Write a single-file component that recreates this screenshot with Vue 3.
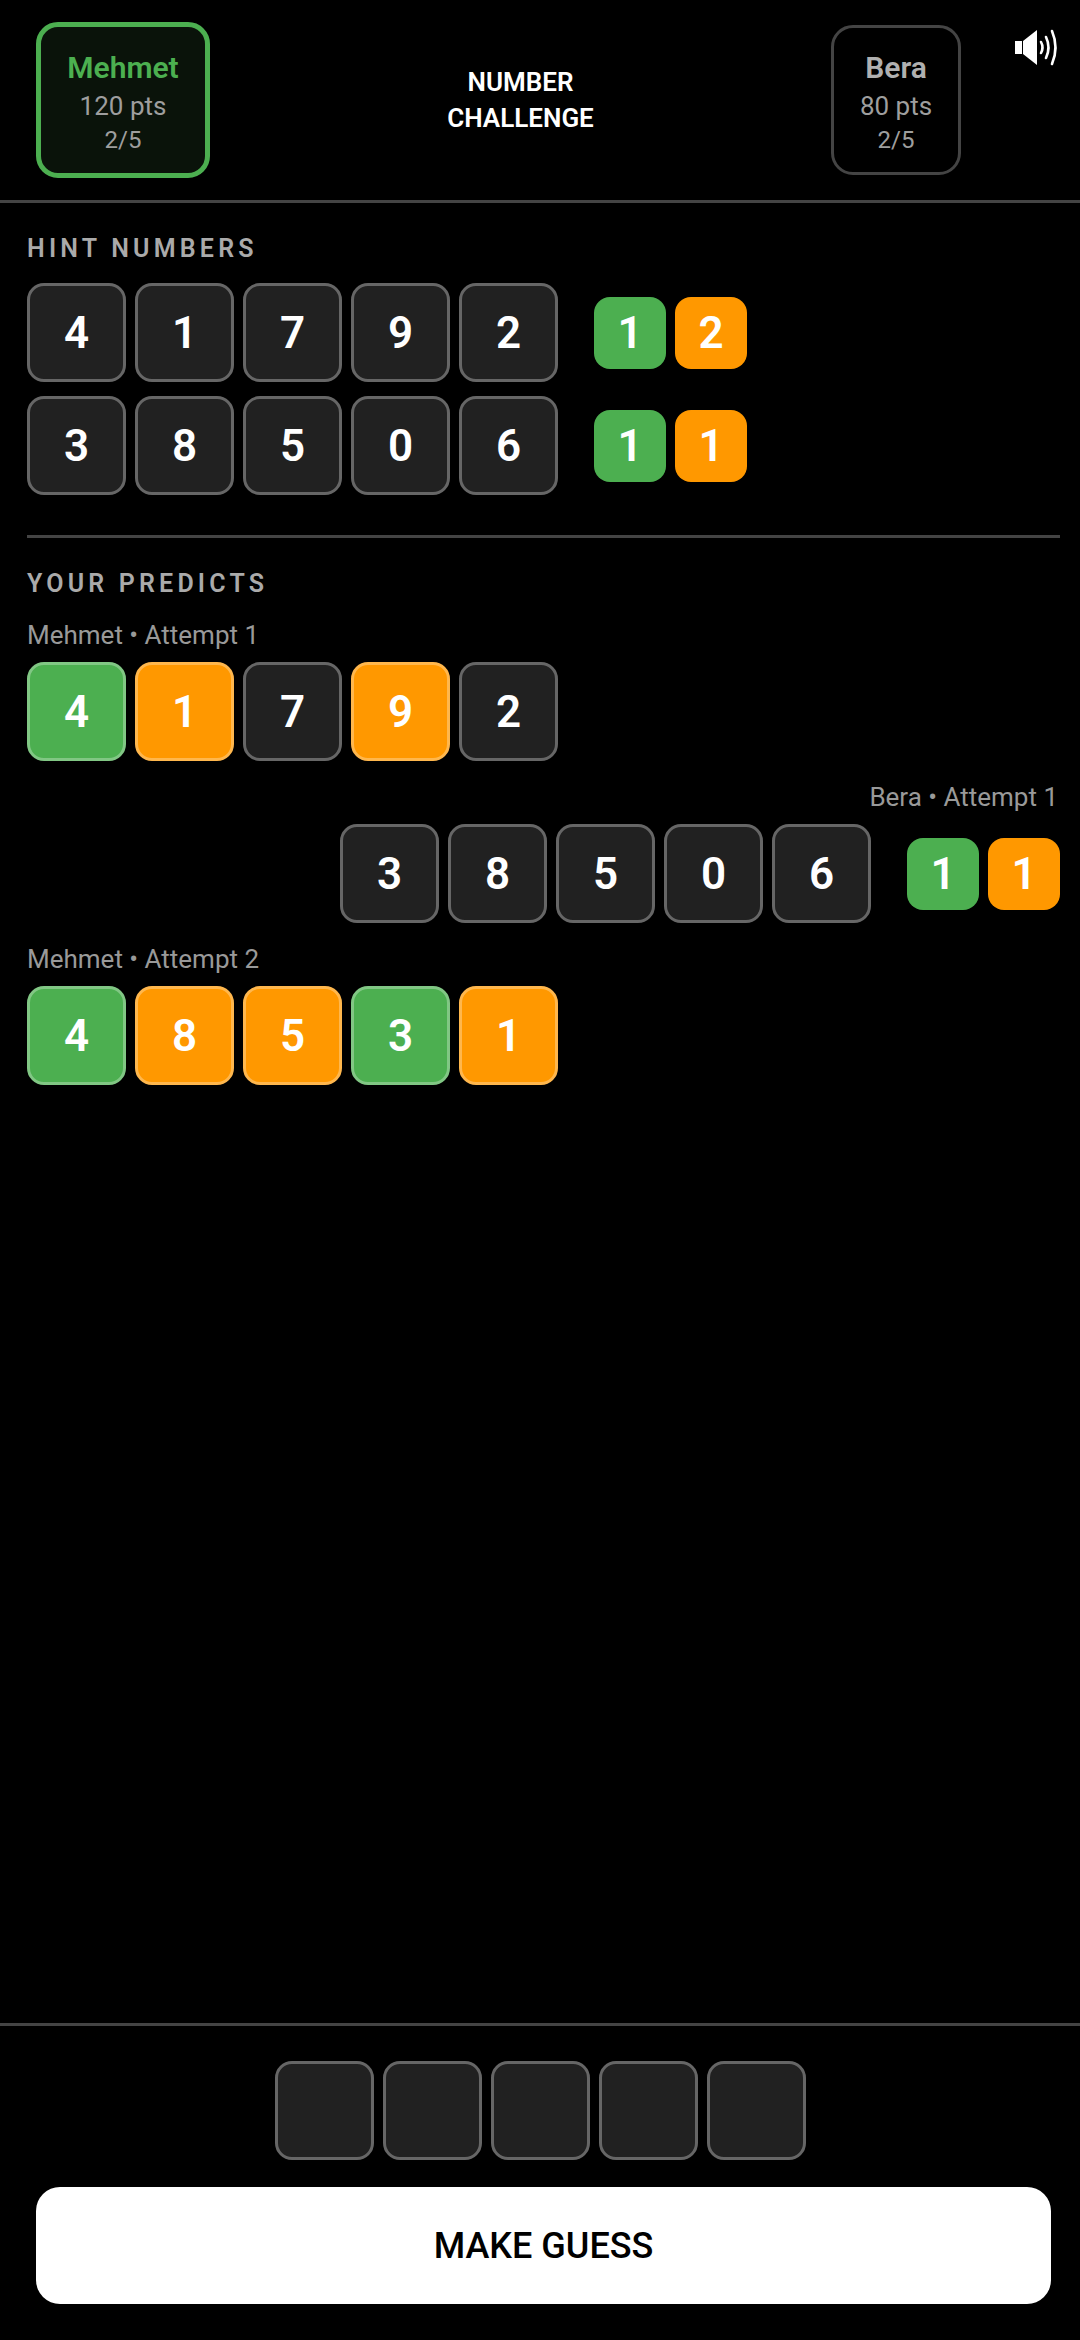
<script setup>
import { ref } from 'vue'

const players = ref([
  { name: 'Mehmet', points: '120 pts', progress: '2/5', active: true },
  { name: 'Bera', points: '80 pts', progress: '2/5', active: false }
])

const hints = ref([
  { digits: '41792', correct: 1, misplaced: 2 },
  { digits: '38506', correct: 1, misplaced: 1 }
])

// g = right place, o = wrong place, n = not in the number
const predicts = ref([
  { label: 'Mehmet • Attempt 1', digits: '41792', marks: 'gonon', mine: true },
  { label: 'Bera • Attempt 1', digits: '38506', marks: 'nnnnn', mine: false, correct: 1, misplaced: 1 },
  { label: 'Mehmet • Attempt 2', digits: '48531', marks: 'googo', mine: true }
])

const tileClass = (mark) => {
  if (mark === 'g') return 'green'
  if (mark === 'o') return 'orange'
  return ''
}
</script>

<template>
  <div class="page">
    <header class="top">
      <div class="player" :class="{ active: players[0].active }">
        <div class="player-name">{{ players[0].name }}</div>
        <div class="player-points">{{ players[0].points }}</div>
        <div class="player-progress">{{ players[0].progress }}</div>
      </div>
      <div class="game-title">NUMBER<br />CHALLENGE</div>
      <div class="player">
        <div class="player-name">{{ players[1].name }}</div>
        <div class="player-points">{{ players[1].points }}</div>
        <div class="player-progress">{{ players[1].progress }}</div>
      </div>
      <svg class="sound" viewBox="0 0 46 38" width="46" height="38">
        <path d="M0 13h7v13H0zM8 13L22 2v35L8 26z" fill="#fff" />
        <path d="M26 14q3 5.500 0 11M31 9q5 10.500 0 21M37 3q7 16.500 0 33" fill="none" stroke="#fff" stroke-width="2.600" stroke-linecap="round" />
      </svg>
    </header>

    <main class="content">
      <section class="hints">
        <h2 class="section-title">HINT NUMBERS</h2>
        <div v-for="hint in hints" :key="hint.digits" class="row">
          <div class="tiles">
            <div v-for="d in hint.digits" :key="d" class="tile">{{ d }}</div>
          </div>
          <div class="feedback">
            <div class="count green">{{ hint.correct }}</div>
            <div class="count orange">{{ hint.misplaced }}</div>
          </div>
        </div>
      </section>

      <section class="predicts">
        <h2 class="section-title">YOUR PREDICTS</h2>
        <div v-for="p in predicts" :key="p.label" class="predict" :class="{ other: !p.mine }">
          <div class="attempt">{{ p.label }}</div>
          <div class="row">
            <div class="tiles">
              <div v-for="(d, i) in p.digits" :key="d" class="tile" :class="tileClass(p.marks[i])">{{ d }}</div>
            </div>
            <div v-if="!p.mine" class="feedback">
              <div class="count green">{{ p.correct }}</div>
              <div class="count orange">{{ p.misplaced }}</div>
            </div>
          </div>
        </div>
      </section>
    </main>

    <footer class="bottom">
      <div class="tiles">
        <div v-for="n in 5" :key="n" class="tile"></div>
      </div>
      <button type="button" class="guess">MAKE GUESS</button>
    </footer>
  </div>
</template>

<style>
html,
body {
  background: #000;
}
</style>

<style scoped>
.page {
  height: 2340px;
  display: flex;
  flex-direction: column;
  background: #000;
  color: #fff;
  font-family: Roboto, "Noto Sans", sans-serif;
}

.top {
  position: relative;
  height: 203px;
  box-sizing: border-box;
  display: flex;
  align-items: center;
  padding: 0 119px 0 36px;
  border-bottom: 3px solid #444;
}

.player {
  width: 130px;
  height: 150px;
  box-sizing: border-box;
  padding-top: 4px;
  display: flex;
  flex-direction: column;
  align-items: center;
  justify-content: center;
  border: 3px solid #444;
  border-radius: 22px;
  color: #9e9e9e;
}

.player.active {
  width: 174px;
  height: 156px;
  border: 5px solid #4caf50;
  background: #0a130a;
}

.player-name {
  font-size: 30px;
  font-weight: 600;
  line-height: 40px;
  color: #b0b0b0;
}

.active .player-name {
  color: #4caf50;
}

.player-points {
  font-size: 26px;
  line-height: 36px;
}

.player-progress {
  font-size: 24px;
  line-height: 32px;
}

.game-title {
  flex: 1;
  text-align: center;
  font-size: 26px;
  font-weight: 600;
  line-height: 36px;
}

.sound {
  position: absolute;
  top: 28px;
  left: 1015px;
}

.content {
  flex: 1;
  padding: 31px 20px 0 27px;
}

.section-title {
  margin: 0;
  font-size: 25px;
  font-weight: 600;
  line-height: 30px;
  letter-spacing: 4.200px;
  color: #aaa;
}

.hints {
  padding-bottom: 40px;
  border-bottom: 3px solid #444;
}

.hints .section-title {
  margin-bottom: 19px;
}

.hints .row + .row {
  margin-top: 14px;
}

.predicts .section-title {
  margin-bottom: 3px;
}

.row {
  display: flex;
  align-items: center;
}

.tiles {
  display: flex;
  gap: 9px;
}

.tile {
  width: 99px;
  height: 99px;
  box-sizing: border-box;
  display: flex;
  align-items: center;
  justify-content: center;
  background: #212121;
  border: 3px solid #666;
  border-radius: 17px;
  font-size: 44px;
  font-weight: 600;
}

.tile.green {
  background: #4caf50;
  border-color: #81c784;
}

.tile.orange {
  background: #ff9800;
  border-color: #ffb74d;
}

.feedback {
  display: flex;
  gap: 9px;
  margin-left: 36px;
}

.count {
  width: 72px;
  height: 72px;
  display: flex;
  align-items: center;
  justify-content: center;
  border-radius: 16px;
  font-size: 44px;
  font-weight: 600;
}

.count.green {
  background: #4caf50;
}

.count.orange {
  background: #ff9800;
}

.predicts {
  padding-top: 31px;
}

.predict {
  margin-top: 21px;
}

.predict .attempt {
  font-size: 26px;
  line-height: 30px;
  margin-bottom: 12px;
  color: #999;
}

.predict.other .attempt {
  padding-right: 2px;
  text-align: right;
}

.predict.other .row {
  justify-content: flex-end;
}

.bottom {
  display: flex;
  flex-direction: column;
  align-items: center;
  padding: 35px 0 36px;
  border-top: 3px solid #444;
}

.guess {
  align-self: stretch;
  height: 117px;
  margin: 27px 29px 0 36px;
  background: #fff;
  color: #000;
  border: none;
  border-radius: 24px;
  font-family: Roboto, "Noto Sans", sans-serif;
  font-size: 36px;
  font-weight: 500;
}
</style>
